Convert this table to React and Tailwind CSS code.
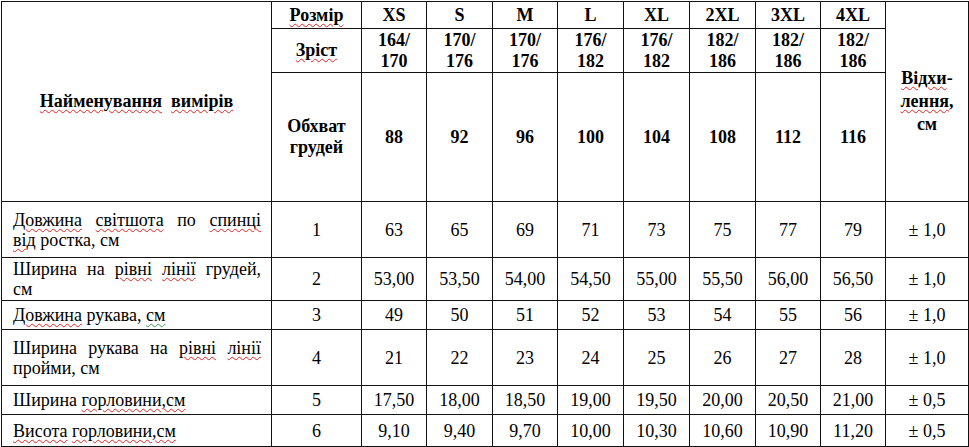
import React from 'react';

const sizes = ['XS', 'S', 'M', 'L', 'XL', '2XL', '3XL', '4XL'];
const heights = [
    ['164/', '170'], ['170/', '176'], ['170/', '176'], ['176/', '182'],
    ['176/', '182'], ['182/', '186'], ['182/', '186'], ['182/', '186'],
];
const chest = ['88', '92', '96', '100', '104', '108', '112', '116'];

// Червоне хвилясте підкреслення, як у Word
const W = ({ children, green }) => (
    <span
        className={
            'underline decoration-wavy decoration-1 underline-offset-[2px] ' +
            (green ? 'decoration-[#3c9a52]' : 'decoration-[#e32424]')
        }
    >
        {children}
    </span>
);

const rows = [
    {
        h: 'h-[56px]',
        first: <><W>Довжина</W> <W>світшота</W> по <W>спинці</W></>,
        rest: <><W>від</W> ростка, см</>,
        n: '1',
        v: ['63', '65', '69', '71', '73', '75', '77', '79'],
        tol: '± 1,0',
    },
    {
        h: 'h-[43px]',
        first: <>Ширина на <W>рівні</W> <W>лінії</W> грудей,</>,
        rest: <>см</>,
        n: '2',
        v: ['53,00', '53,50', '54,00', '54,50', '55,00', '55,50', '56,00', '56,50'],
        tol: '± 1,0',
    },
    {
        h: 'h-[29px]',
        rest: <><W>Довжина</W> рукава, <W green>см</W></>,
        n: '3',
        v: ['49', '50', '51', '52', '53', '54', '55', '56'],
        tol: '± 1,0',
    },
    {
        h: 'h-[56px]',
        first: <>Ширина рукава на <W>рівні</W> <W>лінії</W></>,
        rest: <>пройми, см</>,
        n: '4',
        v: ['21', '22', '23', '24', '25', '26', '27', '28'],
        tol: '± 1,0',
    },
    {
        h: 'h-[29px]',
        rest: <>Ширина <W>горловини,см</W></>,
        n: '5',
        v: ['17,50', '18,00', '18,50', '19,00', '19,50', '20,00', '20,50', '21,00'],
        tol: '± 0,5',
    },
    {
        h: 'h-[32px]',
        rest: <><W>Висота</W> <W>горловини,см</W></>,
        n: '6',
        v: ['9,10', '9,40', '9,70', '10,00', '10,30', '10,60', '10,90', '11,20'],
        tol: '± 0,5',
    },
];

const cell = 'border border-[#111] text-center align-middle p-0';

export default function App() {
    return (
        <div className="bg-white w-[969px] h-[447px] pt-[1px] pl-[1px] text-black font-serif text-[18px] leading-[21px]">
            <table className="table-fixed border-collapse w-[967px] font-['Liberation_Serif']">
                <colgroup>
                    <col className="w-[270px]" />
                    <col className="w-[90px]" />
                    <col className="w-[65px]" />
                    <col className="w-[66px]" />
                    <col className="w-[65px]" />
                    <col className="w-[66px]" />
                    <col className="w-[66px]" />
                    <col className="w-[66px]" />
                    <col className="w-[65px]" />
                    <col className="w-[65px]" />
                    <col className="w-[83px]" />
                </colgroup>
                <tbody className="font-bold">
                    <tr className="h-[27px]">
                        <td rowSpan={3} className={cell}>
                            <W>Найменування</W>&nbsp; <W>вимірів</W>
                        </td>
                        <td className={cell}><W>Розмір</W></td>
                        {sizes.map(s => (
                            <td key={s} className={cell}>{s}</td>
                        ))}
                        <td rowSpan={3} className={cell}>
                            <div className="leading-[23px]">
                                <W>Відхи</W>-<br />
                                <W>лення</W>,<br />
                                см
                            </div>
                        </td>
                    </tr>
                    <tr className="h-[44px]">
                        <td className={cell}><W>Зріст</W></td>
                        {heights.map((h, i) => (
                            <td key={i} className={cell}>
                                {h[0]}<br />{h[1]}
                            </td>
                        ))}
                    </tr>
                    <tr className="h-[129px]">
                        <td className={cell}>Обхват<br />грудей</td>
                        {chest.map(c => (
                            <td key={c} className={cell}>{c}</td>
                        ))}
                    </tr>
                </tbody>
                <tbody className="font-normal leading-[20px]">
                    {rows.map(r => (
                        <tr key={r.n} className={r.h}>
                            <td className="border border-[#111] align-middle pl-[11px] pr-[10px] py-0 text-left">
                                {r.first && (
                                    <div className="text-justify [text-align-last:justify]">{r.first}</div>
                                )}
                                <div>{r.rest}</div>
                            </td>
                            <td className={cell}>{r.n}</td>
                            {r.v.map((x, i) => (
                                <td key={i} className={cell}>{x}</td>
                            ))}
                            <td className={cell}>{r.tol}</td>
                        </tr>
                    ))}
                </tbody>
            </table>
        </div>
    );
}
